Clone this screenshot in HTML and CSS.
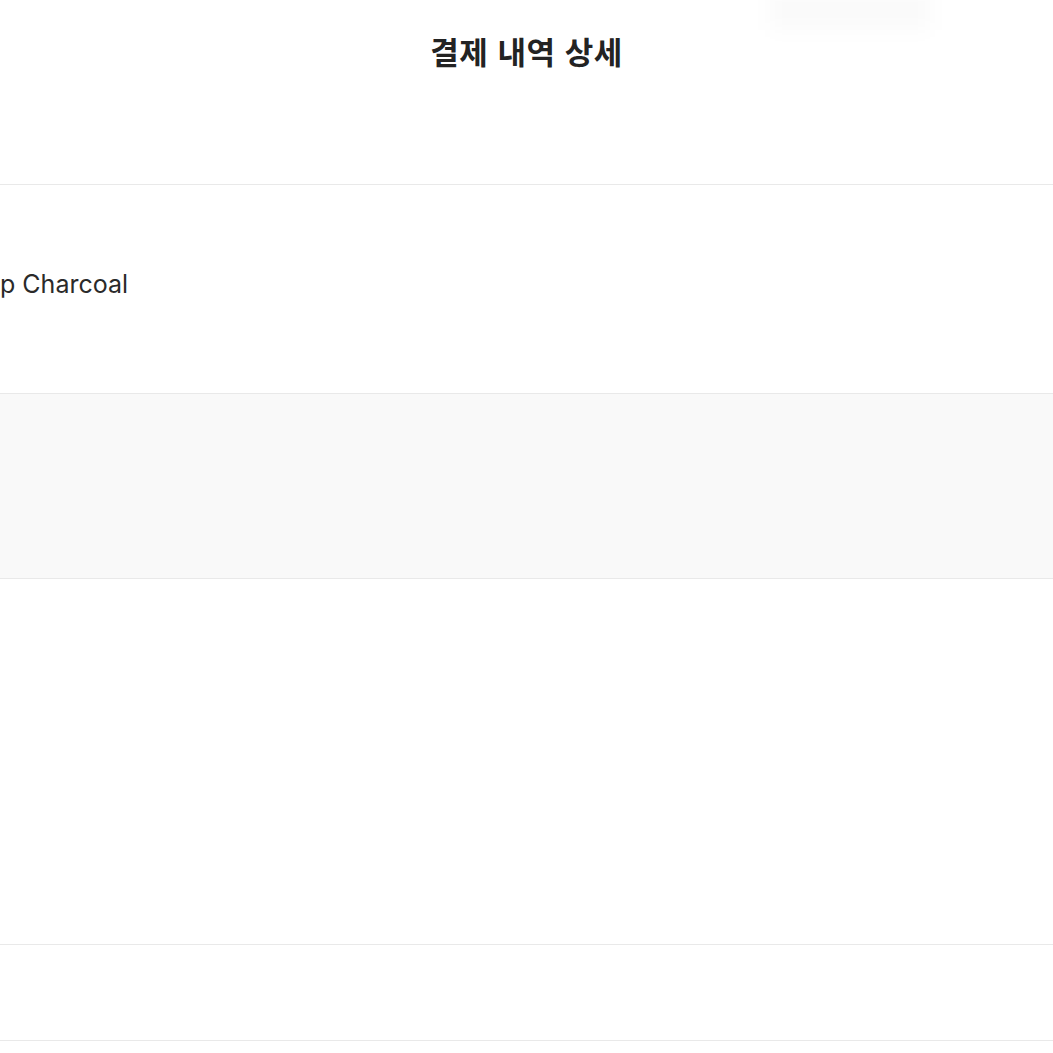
FILE: index.html
```html
<!DOCTYPE html>
<html lang="ko">
<head>
  <meta charset="UTF-8" />
  <title>결제 내역 상세</title>
  <link rel="stylesheet" href="styles.css">
</head>
<body>
  <div class="glow"></div>
  <header class="top">
    <h1>결제 내역 상세</h1>
  </header>

  <section class="row item">
    <span class="name">p Charcoal</span>
  </section>
  <section class="row summary"></section>
  <section class="row detail"></section>
  <section class="row footer"></section>
  <section class="row rest"></section>
</body>
</html>
```

FILE: styles.css
```css
body{margin:0;font-family:Inter,"Noto Sans","Noto Sans CJK KR",sans-serif;background:#fff;color:#2b2b2b;overflow:hidden}
.glow{position:absolute;top:-10px;left:770px;width:160px;height:40px;background:rgba(0,0,0,.018);filter:blur(10px)}
.top{height:184px;border-bottom:1px solid #e9e9e9;display:flex;justify-content:center}
.top h1{margin:0;padding-top:28px;font-size:31px;font-weight:700;color:#232323;letter-spacing:.5px;font-family:"Noto Sans CJK KR",sans-serif}
.row{border-bottom:1px solid #e9e9e9}
.item{height:208px;display:flex;align-items:center}
.item .name{font-size:25px;color:#2a2a2a;margin-top:-10px}
.summary{height:184px;background:#f9f9f9}
.detail{height:365px}
.footer{height:95px}
.rest{height:40px;border-bottom:none}
```
